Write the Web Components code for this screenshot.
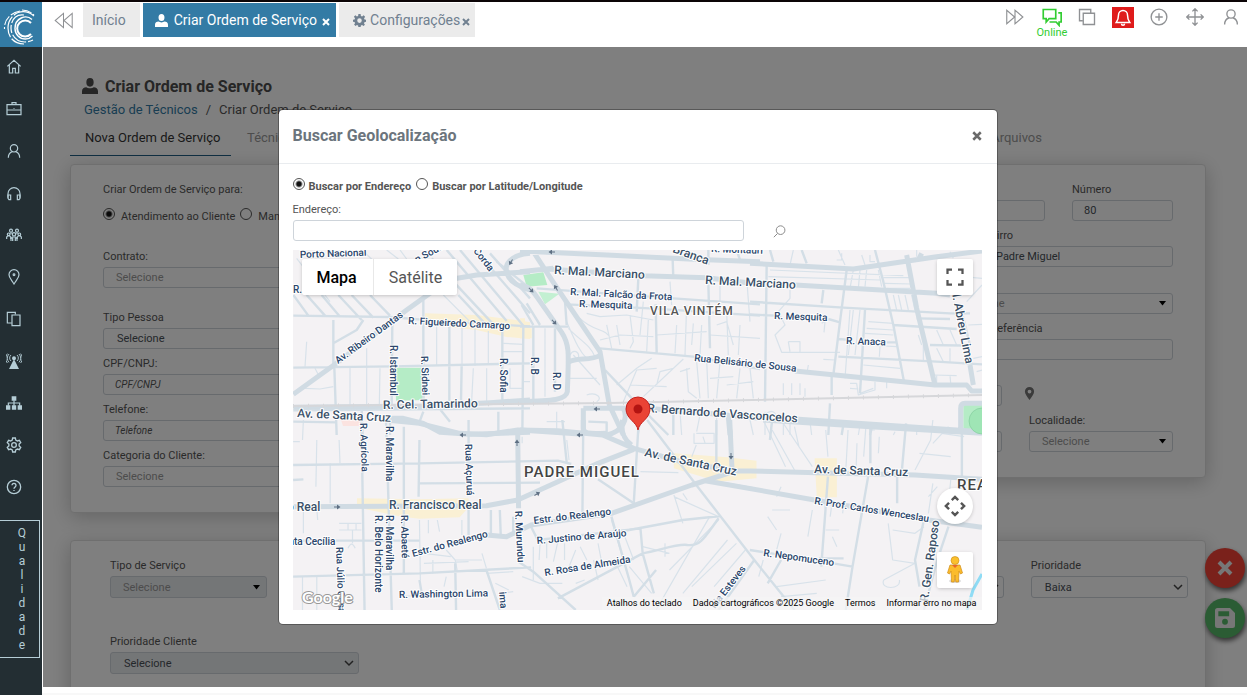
<!DOCTYPE html>
<html lang="pt-BR">
<head>
<meta charset="utf-8">
<title>Criar Ordem de Serviço</title>
<style>
  html, body { height: 100%; }
  body { margin: 0; background: #fff; font-family: Roboto, "Liberation Sans", sans-serif; font-size: 11px; color: #555; overflow: hidden; }
</style>
</head>
<body>
<app-shell>
  <side-bar slot="side"></side-bar>
  <top-bar slot="top"></top-bar>
  <order-page slot="page"></order-page>
  <modal-dialog slot="dialog" heading="Buscar Geolocalização">
    <geo-search></geo-search>
    <street-map></street-map>
  </modal-dialog>
</app-shell>

<script>
const define = (name, html, setup) => {
  const tpl = document.createElement('template');
  tpl.innerHTML = '<style>*{box-sizing:border-box}</style>' + html;
  customElements.define(name, class extends HTMLElement {
    constructor() {
      super();
      this.attachShadow({ mode: 'open' }).append(tpl.content.cloneNode(true));
    }
    connectedCallback() {
      if (setup && !this.ready) { this.ready = true; setup(this, this.shadowRoot); }
    }
  });
};

/* ---------- icons ---------- */
const ICONS = {
  home: '<path d="M2 11 12 2l10 9M5 9v12h5v-7h4v7h5V9"/>',
  briefcase: '<path d="M1.500 5.500h21v15h-21zM2 13.500h20M9 5V2.500h6V5M12 10.500v1"/>',
  user: '<circle cx="12" cy="8" r="5.500"/><path d="M3.500 22c0-5 3-8 6-9M20.500 22c0-5-3-8-6-9"/>',
  headset: '<path d="M3 19v-6a9 9 0 0 1 18 0v6"/><path d="M3 15h4v7H4.500L3 20zM21 15h-4v7h2.500l1.500-2z"/>',
  team: '<circle cx="12" cy="11" r="2.500"/><circle cx="7.500" cy="5.500" r="2.200"/><circle cx="16.500" cy="5.500" r="2.200"/><circle cx="4" cy="11" r="2"/><circle cx="20" cy="11" r="2"/><path d="M7.500 21v-3l2-3h5l2 3v3M1 18v-3l2-2h2l2 2v3M23 18v-3l-2-2h-2l-2 2v3M7.500 8v3M16.500 8v3M10 16v5M14 16v5"/>',
  pin: '<path d="M12 22.500C8 16 4.500 13 4.500 8.500a7.500 7.500 0 0 1 15 0c0 4.500-3.500 7.500-7.500 14z"/><circle cx="12" cy="8.500" r="1.300"/>',
  pages: '<path d="M8 18H2V2h12v3M9 6h12v16H9z"/>',
  antenna: '<path fill="currentColor" stroke="none" d="M12 9l7.500 15h-15zM9 8a3 3 0 1 1 6 0 3 3 0 0 1-6 0z"/><path d="M7.500 12a6 6 0 0 1 0-9M16.500 12a6 6 0 0 0 0-9M4.500 14A9 9 0 0 1 4.500 1.500M19.500 14a9 9 0 0 0 0-12.500M2 15a12 12 0 0 1 0-14M22 15a12 12 0 0 0 0-14"/>',
  sitemap: '<path fill="currentColor" stroke="none" d="M8.500 2h7v6.500h-7zM0 15.500h6.500V22H0zM8.800 15.500h6.500V22H8.800zM17.500 15.500H24V22h-6.500z"/><path d="M3.500 16v-4h17v4M12 8v8"/>',
  gear: '<circle cx="12" cy="12" r="3.500"/><path d="M10 1.500h4l.7 3.200 2.300 1.300 3.100-1 2 3.500-2.400 2.200v2.600l2.400 2.200-2 3.500-3.100-1-2.300 1.300-.7 3.200h-4l-.7-3.200L7 18l-3.100 1-2-3.500 2.400-2.200v-2.600L1.900 8.500l2-3.500L7 6l2.300-1.300z"/>',
  help: '<circle cx="12" cy="12" r="10"/><path d="M9 9.500a3 3 0 1 1 4.500 2.600c-1 .6-1.500 1-1.500 2.400M12 16.500v1.500"/>',
  rewind: '<path d="M12 3v18L1.500 12zM23 3v18L12.500 12z"/>',
  forward: '<path d="M12 3v18l10.500-9zM1 3v18l10.500-9z"/>',
  chat: '<path d="M1.500 3h15v11H8.500L5 18v-4H1.500zM19.500 7H23v11h-2.500v4L17 18h-7v-1"/>',
  copy: '<path d="M6 17H2V2h15v4M7 7h15v15H7z"/>',
  bell: '<path d="M12 2a6 6 0 0 1 6 6c0 6 1.500 8 3 10H3c1.500-2 3-4 3-10a6 6 0 0 1 6-6zM10 19.500a2 2 0 0 0 4 0"/>',
  plus: '<circle cx="12" cy="12" r="10.500"/><path d="M12 7v10M7 12h10"/>',
  move: '<path d="M12 1v22M1 12h22M8.500 4.500 12 1l3.500 3.500M8.500 19.500 12 23l3.500-3.500M4.500 8.500 1 12l3.500 3.500M19.500 8.500 23 12l-3.500 3.500"/>',
  person: '<path fill="currentColor" stroke="none" d="M12 0a5.500 6.500 0 0 1 0 13A5.500 6.500 0 0 1 12 0zM0 24v-4c0-4 3-6 6.500-6 2.500 2 8.500 2 11 0C21 14 24 16 24 20v4z"/>',
  cog: '<path fill="currentColor" stroke="none" fill-rule="evenodd" d="M10 0h4l.6 3.500 2.200.9L19.700 2.500l2.600 2.700-1.900 2.900.9 2.200 2.700.5v3.600l-2.900.6-.9 2.200 1.800 2.500-2.600 2.600-2.600-1.800-2.200.9-.6 3.300h-4l-.6-3.300-2.200-.9-2.600 1.800L2 19.600l1.800-2.500-.9-2.200-2.900-.6v-3.600l2.900-.5.8-2.200L1.700 5.200l2.600-2.700 2.900 1.900L9.400 3.500zM12 8a4.200 4.200 0 1 0 0 8.400A4.200 4.200 0 0 0 12 8z"/>',
  close: '<path stroke-width="6" d="M3 3l18 18M21 3 3 21"/>',
  search: '<circle cx="14" cy="9.500" r="8"/><path d="M8.500 15.500l-7 7"/>',
  marker: '<path fill="currentColor" stroke="none" fill-rule="evenodd" d="M12 0a8.500 8.500 0 0 1 8.500 8.500C20.500 14 16 18 12 24 8 18 3.500 14 3.500 8.500A8.500 8.500 0 0 1 12 0zm0 5a3.500 3.500 0 1 0 0 7 3.500 3.500 0 0 0 0-7z"/>',
  save: '<path fill="currentColor" stroke="none" fill-rule="evenodd" d="M3 0h15l6 6v15a3 3 0 0 1-3 3H3a3 3 0 0 1-3-3V3a3 3 0 0 1 3-3zm1 4v6h13V4zm8 9a3.500 3.500 0 1 0 0 7 3.500 3.500 0 0 0 0-7z"/>',
  expand: '<path stroke-width="3" d="M2 8V2h6M16 2h6v6M22 16v6h-6M8 22H2v-6"/>',
  pan: '<path stroke-width="2.600" d="M8.500 5.500 12 2l3.500 3.500M8.500 18.500 12 22l3.500-3.500M5.500 8.500 2 12l3.500 3.500M18.500 8.500 22 12l-3.500 3.500"/>'
};
define('ui-icon', `<style>
  :host { display: inline-flex; width: var(--size, 16px); height: var(--size, 16px); flex: none; }
  svg { width: 100%; height: 100%; }
</style><svg viewBox="0 0 24 24" fill="none" stroke="currentColor" aria-hidden="true"></svg>`, (el, root) => {
  const svg = root.querySelector('svg');
  svg.setAttribute('stroke-width', el.getAttribute('weight') || 1.8);
  svg.innerHTML = ICONS[el.getAttribute('name')];
});

/* ---------- shell ---------- */
define('app-shell', `<style>
  :host { display: grid; grid-template-columns: 42px minmax(0, 1fr); height: 100%; border-top: 2px solid #0c0507; box-sizing: border-box; }
  .right { display: grid; grid-template-rows: 45px minmax(0, 1fr) 8px; min-width: 0; min-height: 0; height: 100%; }
  main { position: relative; overflow: hidden; margin-left: 1px; min-height: 0; }
  .shade { position: absolute; inset: 0; background: rgba(0,0,0,.5); display: flex; justify-content: center; align-items: flex-start; padding: 63px 15px 0 0; }
  footer { border-bottom: 2px solid #f8f8f8; }
</style>
<slot name="side"></slot>
<div class="right">
  <slot name="top"></slot>
  <main><slot name="page"></slot><div class="shade"><slot name="dialog"></slot></div></main>
  <footer></footer>
</div>`);

define('side-bar', `<style>
  :host { display: block; background: #232e33; color: #b5cdd6; min-height: 0; overflow: hidden; }
  .logo { display: block; height: 45px; background: #337ba5; }
  .logo svg { display: block; width: 42px; height: 45px; }
  nav { display: flex; flex-direction: column; align-items: flex-start; padding-top: 12px; gap: 26px; }
  nav a { --size: 16px; height: 16px; margin-left: 6px; color: inherit; display: flex; }
  .quality { display: flex; align-items: center; justify-content: flex-end; width: 40px; height: 138px; margin-top: 25px; padding: 0 9px 0 0; border: 1px solid #b5cdd6; border-left: 0; background: none; color: #b5cdd6; font: 12px/16px Roboto, sans-serif; }
  .quality span { writing-mode: vertical-rl; text-orientation: upright; }
</style>
<a class="logo" href="#" aria-label="Início do sistema"><svg viewBox="0 0 42 45" fill="none" stroke="#fff">
  <path stroke-width="2" d="M31 21a8 8 0 1 0 0 11"/>
  <path stroke-width="1.400" d="M32 17.500C26 12 15 16 15 26.500c0 6 4.500 10.500 10.500 10.500 3 0 5-1 7-3"/>
  <path stroke-width="1.200" stroke-dasharray="16 2 8 2" d="M24 13C16 12 11 18 11 26c0 8 6 14 14 14 3 0 6-1 8-2"/>
  <path stroke-width="1.200" stroke-dasharray="22 2" d="M34 14C22 4 8 13 8 26c0 9 6 16 16 16"/>
  <path stroke-width="1.100" stroke-dasharray="10 2" d="M20 9C10 11 4 18 4.500 27M22 8c5 0 9 2 12 5"/>
</svg></a>
<nav aria-label="Principal">
  <a href="#" aria-label="Painel"><ui-icon name="home"></ui-icon></a>
  <a href="#" aria-label="Empresa"><ui-icon name="briefcase"></ui-icon></a>
  <a href="#" aria-label="Clientes"><ui-icon name="user"></ui-icon></a>
  <a href="#" aria-label="Suporte"><ui-icon name="headset"></ui-icon></a>
  <a href="#" aria-label="Equipes"><ui-icon name="team"></ui-icon></a>
  <a href="#" aria-label="Locais"><ui-icon name="pin"></ui-icon></a>
  <a href="#" aria-label="Documentos"><ui-icon name="pages"></ui-icon></a>
  <a href="#" aria-label="Rede"><ui-icon name="antenna" weight="1.400"></ui-icon></a>
  <a href="#" aria-label="Estrutura"><ui-icon name="sitemap"></ui-icon></a>
  <a href="#" aria-label="Ajustes"><ui-icon name="gear" weight="2"></ui-icon></a>
  <a href="#" aria-label="Ajuda"><ui-icon name="help" weight="2"></ui-icon></a>
</nav>
<button class="quality" type="button"><span>Qualidade</span></button>`);

define('top-bar', `<style>
  :host { display: flex; justify-content: space-between; align-items: flex-start; background: #fff; color: #8f9194; }
  .tabs { display: flex; align-items: center; gap: 3px; padding: 1px 0 0 12px; font-size: 14px; }
  button, a { font: inherit; color: inherit; text-decoration: none; border: 0; background: none; padding: 0; }
  .back { --size: 19px; margin-right: 7px; display: flex; }
  .tab { display: flex; align-items: center; height: 34px; padding: 0 6px 0 12px; background: #ebebeb; color: #708090; white-space: nowrap; }
  .tab > a { display: flex; align-items: center; gap: 6px; --size: 13px; }
  .tab > button { --size: 8px; margin: 3px 0 0 5px; display: flex; }
  .tab.plain { padding: 0 14px 0 9px; }
  .tab.on { background: #337ba5; color: #fff; }
  .tab.last { padding: 0 5px 0 14px; }
  .tab.last > a { gap: 4px; }
  .tab.last > button { margin-left: 2px; }
  .tools { display: flex; gap: 16px; padding: 5px 6px 0 0; --size: 18px; }
  .tools button { width: 20px; height: 20px; display: flex; flex-direction: column; align-items: center; justify-content: center; }
  .tools .chat { color: #32cd32; justify-content: flex-start; font-size: 11px; line-height: 12px; --size: 20px; height: 34px; margin-left: 1px; margin-right: -1px; }
  .tools .bell { background: #df1b1b; color: #fff; width: 22px; height: 21px; margin: 0 -1px; }
</style>
<div class="tabs">
  <button class="back" type="button" aria-label="Abas anteriores"><ui-icon name="rewind" weight="1.300"></ui-icon></button>
  <div class="tab plain"><a href="#">Início</a></div>
  <div class="tab on"><a href="#"><ui-icon name="person"></ui-icon>Criar Ordem de Serviço</a><button type="button" aria-label="Fechar aba"><ui-icon name="close"></ui-icon></button></div>
  <div class="tab last"><a href="#"><ui-icon name="cog"></ui-icon>Configurações</a><button type="button" aria-label="Fechar aba"><ui-icon name="close"></ui-icon></button></div>
</div>
<div class="tools">
  <button type="button" aria-label="Próximas abas"><ui-icon name="forward" weight="1.500"></ui-icon></button>
  <button type="button" class="chat"><ui-icon name="chat" weight="2"></ui-icon>Online</button>
  <button type="button" aria-label="Duplicar"><ui-icon name="copy"></ui-icon></button>
  <button type="button" class="bell" aria-label="Avisos"><ui-icon name="bell" weight="2"></ui-icon></button>
  <button type="button" aria-label="Adicionar"><ui-icon name="plus"></ui-icon></button>
  <button type="button" aria-label="Mover"><ui-icon name="move"></ui-icon></button>
  <button type="button" aria-label="Perfil"><ui-icon name="user"></ui-icon></button>
</div>`);

/* ---------- form pieces ---------- */
const FIELD = `
  :host { display: block; min-width: 0; }
  label { display: block; height: 20px; line-height: 20px; white-space: nowrap; color: #555; }
  label:empty { display: none; }
  :host([gap]) label:empty { display: block; }
  input, select { display: block; width: 100%; height: var(--control, 21px); border: 1px solid #ced4da; border-radius: 3px; background: #fff; color: #495057; font: inherit; padding: 0 11px; margin: 0; }
  input::placeholder { font-style: italic; font-size: 10px; color: #555; opacity: 1; }
  select { appearance: none; background: #fff no-repeat right 6px center; }
`;
define('text-field', `<style>${FIELD}</style><label for="c"></label><input id="c" type="text">`, (el, root) => {
  const input = root.querySelector('input');
  root.querySelector('label').textContent = el.getAttribute('label') || '';
  input.placeholder = el.getAttribute('placeholder') || '';
  input.value = el.getAttribute('value') || '';
  if (!el.hasAttribute('label')) input.setAttribute('aria-label', el.getAttribute('hint') || 'Campo');
});
const svgBg = s => `url("data:image/svg+xml,${encodeURIComponent(s)}")`;
const ARROW = svgBg('<svg xmlns="http://www.w3.org/2000/svg" width="7" height="5"><path d="M0 0h7L3.500 4.500z" fill="#000"/></svg>');
const CHEVRON = svgBg('<svg xmlns="http://www.w3.org/2000/svg" width="10" height="7"><path d="M1 1l4 4 4-4" fill="none" stroke="#444" stroke-width="1.500"/></svg>');
define('select-field', `<style>${FIELD}
  select { background-image: ${ARROW}; padding-left: 12px; color: #999; }
  :host([native]) select { background-image: ${CHEVRON}; background-position: right 4px center; color: #495057; padding-left: 13px; }
  :host([muted]) select { background-color: #e9ecef; }
</style><label for="c"></label><select id="c"><option></option></select>`, (el, root) => {
  root.querySelector('label').textContent = el.getAttribute('label') || '';
  root.querySelector('option').textContent = el.getAttribute('value') || '';
  if (!el.hasAttribute('label')) root.querySelector('select').setAttribute('aria-label', el.getAttribute('hint') || 'Opções');
});
define('radio-group', `<style>
  :host { display: flex; align-items: center; }
  label { display: flex; align-items: center; white-space: nowrap; gap: var(--radio-gap, 4px); margin-right: 5px; }
  input { appearance: none; width: 12px; height: 12px; margin: 0 0 4px; border: 1px solid #555; border-radius: 50%; flex: none; background: #fff; }
  input:checked { background: radial-gradient(circle, #111 0 2px, #fff 4px); }
</style>`, (el, root) => {
  el.getAttribute('options').split('|').forEach((text, i) => {
    const label = document.createElement('label');
    const input = Object.assign(document.createElement('input'), { type: 'radio', name: 'g', checked: i === 0 });
    label.append(input, text);
    root.append(label);
  });
});

/* ---------- service order page ---------- */
define('panel-card', `<style>
  :host { display: block; background: #fff; border: 1px solid #dfdfdf; border-radius: 4px; box-shadow: 0 4px 20px rgba(0,0,0,.22); box-sizing: border-box; }
</style><slot></slot>`);

define('order-page', `<style>
  :host { display: block; padding: 28px 41px 0 27px; background: #fff; color: #555; }
  h1 { display: flex; align-items: center; gap: 7px; margin: 0; padding-left: 12px; height: 22px; font-size: 16px; font-weight: 700; color: #4c4c4c; --size: 16px; }
  .crumbs { display: flex; gap: 8px; padding-left: 14px; margin-top: 2px; height: 22px; line-height: 22px; font-size: 13px; }
  a { color: #337ba5; text-decoration: none; }
  .tabs { display: flex; height: 35px; font-size: 13px; line-height: 34px; }
  .tabs a { color: #999; padding: 0 16px; height: 35px; }
  .tabs .on { color: #333; border-bottom: 1px solid #1f5f85; width: 161px; padding-left: 15px; white-space: nowrap; }
  .tabs .last { margin: 0 148px 0 auto; }
  .cols { display: grid; grid-template-columns: 1fr 1fr; gap: 24px; align-items: start; margin-top: 8px; }
  .left, .right { display: flex; flex-direction: column; gap: 5px; padding: 15px 32px 25px; }
  .left p { margin: 0; height: 20px; line-height: 20px; }
  radio-group { height: 22px; margin: 0 0 15px; --radio-gap: 6px; }
  .contract { margin-bottom: 15px; }
  .row { display: grid; gap: 27px; align-items: end; }
  .num { grid-template-columns: 1fr 101px; }
  .area { grid-template-columns: 1fr 189px; }
  .ref { grid-template-columns: 1fr 229px; }
  .loc { grid-template-columns: 1fr 144px; }
  .city { padding-top: 21px; }
  .geo { padding-top: 20px; align-items: center; }
  .geo button { border: 0; background: none; padding: 0; color: #777; --size: 13px; margin-left: -6px; height: 18px; display: flex; align-items: flex-start; }
  .more { display: grid; grid-template-columns: repeat(6, 1fr); gap: 34px 27px; padding: 15px 17px 40px 39px; height: 190px; --control: 22px; align-content: start; }
  .c5 { grid-column: 5; }
  .wide { grid-column: 1 / 3; width: 249px; }
  .cols + panel-card { margin-top: 27px; }
  .fabs { position: absolute; right: 2px; bottom: 49px; display: grid; gap: 10px; }
  .fabs button { width: 40px; height: 40px; border: 0; border-radius: 50%; padding: 0; display: grid; place-items: center; color: #eee; background: #f44336; box-shadow: 1px 3px 5px rgba(0,0,0,.6); }
  .fabs .save { background: #57b868; --size: 20px; }
</style>
<h1><ui-icon name="person"></ui-icon>Criar Ordem de Serviço</h1>
<div class="crumbs"><a href="#">Gestão de Técnicos</a><span>/</span><span>Criar Ordem de Serviço</span></div>
<nav class="tabs"><a class="on" href="#">Nova Ordem de Serviço</a><a href="#">Técnicos</a><a class="last" href="#">Arquivos</a></nav>
<div class="cols">
  <panel-card><div class="left">
    <p>Criar Ordem de Serviço para:</p>
    <radio-group options="Atendimento ao Cliente|Manutenção"></radio-group>
    <select-field class="contract" label="Contrato:" value="Selecione"></select-field>
    <select-field native label="Tipo Pessoa" value="Selecione"></select-field>
    <text-field label="CPF/CNPJ:" placeholder="CPF/CNPJ"></text-field>
    <text-field label="Telefone:" placeholder="Telefone"></text-field>
    <select-field label="Categoria do Cliente:" value="Selecione"></select-field>
  </div></panel-card>
  <panel-card><div class="right">
    <div class="row num"><text-field gap hint="Logradouro"></text-field><text-field label="Número" value="80"></text-field></div>
    <div class="row area"><text-field gap hint="Complemento"></text-field><text-field label="Bairro" value="Padre Miguel"></text-field></div>
    <div class="row ref city"><text-field hint="Cidade"></text-field><select-field hint="Estado" value="Selecione"></select-field></div>
    <div class="row ref"><text-field gap hint="CEP"></text-field><text-field label="Ponto de Referência"></text-field></div>
    <div class="row loc geo"><text-field hint="Geolocalização"></text-field><button type="button" aria-label="Localizar no mapa"><ui-icon name="marker"></ui-icon></button></div>
    <div class="row loc"><text-field gap hint="Região"></text-field><select-field label="Localidade:" value="Selecione"></select-field></div>
  </div></panel-card>
</div>
<panel-card><div class="more">
  <select-field muted label="Tipo de Serviço" value="Selecione"></select-field>
  <select-field native gap class="c5" hint="Situação"></select-field>
  <select-field native label="Prioridade" value="Baixa"></select-field>
  <select-field native muted class="wide" label="Prioridade Cliente" value="Selecione"></select-field>
</div></panel-card>
<div class="fabs"><button type="button" aria-label="Cancelar"><ui-icon name="close"></ui-icon></button><button class="save" type="button" aria-label="Salvar"><ui-icon name="save"></ui-icon></button></div>`);

/* ---------- dialog ---------- */
define('modal-dialog', `<style>
  :host { display: block; width: 100%; max-width: 718px; background: #fff; border-radius: 4px; box-shadow: 0 0 0 1px rgba(0,0,0,.3); color: #555; }
  header { display: flex; justify-content: space-between; align-items: center; height: 54px; padding: 0 15px 2px 14px; border-bottom: 1px solid #e9ecef; }
  h2 { margin: 0; font-size: 16px; font-weight: 700; color: #6c757d; }
  button { border: 0; background: none; padding: 0; color: #6a6a6a; --size: 10px; display: flex; }
  .body { padding: 10px 15px 14px 14px; }
</style>
<section role="dialog" aria-labelledby="t">
  <header><h2 id="t"></h2><button type="button" aria-label="Fechar"><ui-icon name="close"></ui-icon></button></header>
  <div class="body"><slot></slot></div>
</section>`, (el, root) => { root.querySelector('h2').textContent = el.getAttribute('heading'); });

define('geo-search', `<style>
  :host { display: block; margin-bottom: 9px; }
  radio-group { font-weight: 700; height: 24px; margin-bottom: 2px; }
  .row { display: flex; align-items: flex-end; gap: 29px; }
  text-field { flex: 0 1 451px; }
  button { border: 0; background: none; padding: 0 0 3px; color: #888; --size: 13px; display: flex; }
</style>
<radio-group options="Buscar por Endereço|Buscar por Latitude/Longitude"></radio-group>
<div class="row"><text-field label="Endereço:"></text-field><button type="button" aria-label="Buscar"><ui-icon name="search"></ui-icon></button></div>`);

/* ---------- map ---------- */
/* Each tile holds its own scale; strokes keep their screen width. */
const TILES = [
  { t: 'translate(-3 -5) scale(.33333)',
    yellow: '405,205 560,210 700,228 720,232 720,282 650,276 560,255 440,242 405,240',
    green: '315,368 395,368 404,465 318,467',
    l: 'M460 150 545 235M215 15 245 42M290 15 325 42M330 15 350 42M440 230 440 362M516 245 516 362M555 250 555 362M595 258 595 360M637 320H700M640 295 700 298M660 370V430H700M45 430 90 432 130 425M75 370 88 395M230 310 230 480M270 370 268 480M180 368V480M20 40 120 170M50 290 45 365M550 370 545 468M590 370V468M700 410H720',
    m: 'M470 15 650 228M425 40 610 238M510 15 700 242M560 20 720 205M600 25 720 160M620 50 720 130M505 150 585 236M10 150 55 212M50 150 105 212M95 150 150 215M145 150 215 225M185 150 250 218M240 150 300 212M220 225 200 255 130 295M10 212 300 216 470 230 720 244M10 368 310 364 720 355M130 225V368M133 368 140 570M307 225 305 480M400 165V470M478 240 478 468M515 362 513 468M637 258V468M700 245 697 570M215 490 218 570M300 530V570M10 530 140 532M400 500 385 540M10 496 720 490M440 480 480 530M625 500V560',
    b: 'M10 448 135 358 350 195 420 145 470 105 560 90 720 80M10 487 400 483 600 473 720 465M290 520 340 520 400 535 450 562 540 568 720 562M720 25C660 30 640 60 652 88 660 110 690 128 720 135' },
  { t: 'translate(227 -5) scale(.33333)',
    green: '10,90 70,82 82,120 20,125', green2: '55,140 118,146 75,178',
    yellow: '0,220 15,220 15,250 35,250 35,280 0,280',
    l: 'M75 250V455M140 230C170 300 180 320 200 340M150 330C160 310 180 320 175 340M145 250C185 290 210 300 225 335M180 220C220 260 260 250 270 280M200 205 240 215 320 210 400 225M240 285 300 270 400 275M290 240 300 300M260 240 275 310M330 210 340 290 330 310M370 170 360 270M385 225 380 320M450 110 455 180M470 240 465 325M500 180 495 330M520 235 515 300M545 240 540 330M590 240 620 230 640 300M600 100 600 175M680 100 690 230M620 200 625 330M660 240 655 330M410 270 560 260M570 270 720 280M290 420 350 370 395 340M310 470 350 375 410 370M330 420 440 425M410 420 420 380 460 370M480 380 510 370M500 370 505 440 530 460M530 350 540 460M560 345 565 460M600 350 590 460M570 400 640 395M620 420 700 410M660 370 650 460M690 370 700 460M200 450C230 440 250 460 230 470M80 530H135M110 500V560M360 540 355 570M150 400H230M160 330 240 420M370 455 490 342M480 500 485 570M540 510 530 560M590 515V570M690 525 700 570',
    m: 'M20 175 60 240M5 180 40 240M0 245 145 245M40 248V470M105 250V440M40 350 35 380M135 170 140 240M407 178 410 325M355 100 350 200M458 45 460 100M565 15 565 60M565 110 570 310M50 130 460 160 720 178M140 178 390 190 720 212M240 310 410 325 520 335 720 372M255 375 350 475 445 570M650 15 660 45M460 500V570M205 530 260 532V570',
    b: 'M0 18 260 30 520 43 720 50M40 20 100 112 240 320 268 480 310 570M0 120C30 125 40 140 50 155L125 262C150 300 146 330 142 440 138 465 100 468 0 470M145 352C170 335 210 350 242 330M85 72 370 92 560 98 720 118M0 80 100 70M190 490 380 490 560 505 720 520M190 490V550C190 570 220 565 260 565M310 490C325 520 310 560 260 570M0 555 190 568M625 515 630 570' },
  { t: 'translate(457 -5) scale(.33333)',
    green: '640,480 700,480 700,555 640,552',
    l: 'M60 75 460 92M55 95 390 105M120 135 120 160 85 200 105 240 75 270 95 322 270 322M115 290 120 320M115 290H150V320M215 235 230 225M225 230 222 262M130 15 120 60M265 15 285 60M335 30 345 60M260 45H275V25M360 30V50H375M310 75 300 130M330 75 325 130M350 75 345 125M385 75 395 125M400 98H480M405 115 485 117M410 130H480M310 195 295 330M330 195 315 330M355 230 430 235M350 250 430 255M345 265 430 270M345 300 440 305M390 305 388 335M340 360 450 370M220 343 255 345M175 360 172 378M100 415V450M125 415V450M150 415V450M165 430V455M300 415H320M300 430 325 432M320 415 325 450 375 435V410M330 445 370 430M410 410V430M300 195 285 400M430 150 440 195M445 150 455 195M465 150 475 195M485 150 495 195M560 255 580 300M600 255 620 300M520 300V350M505 270 515 300M560 310 580 350M600 310 600 350M540 300 640 300M560 390V415M600 390 602 415M550 390 620 392M600 20 610 40M500 15V35M670 340 696 335M680 380 696 375M650 170 696 120M640 95 696 100M655 240 696 238M330 540 325 570M100 530V570M120 530V570M180 530 185 570M435 560 430 570M500 548V570M50 505C70 490 85 510 75 525M45 500V570',
    m: 'M50 60 45 470M290 75 270 230 250 390M245 395 245 450M345 195 330 445M0 170 280 188 600 205 660 205M0 208 75 212M235 222 270 232M265 282 290 284M410 292H440M265 335 560 350 696 358M430 240 620 252M375 15 400 110 430 240 462 410M155 15 170 55M220 135 215 175M540 300 640 302M630 180 660 300M240 475 235 570M280 540 275 570M365 550 360 570M60 15 70 50M500 220 600 222',
    b: 'M0 55 310 72 560 35 696 18M135 120 560 145 600 150M135 378 460 410 555 420 650 420 665 438 696 438M470 30 500 190 555 420M660 360 670 420M135 522 400 540 696 560M632 555V490Q632 475 645 475H696M505 45 515 25' },
  { t: 'translate(-3 170) scale(.44643 .33333)',
    yellow: '150,235 290,238 400,235 400,262 380,292 290,296 250,290 150,262',
    yellow2: '860,100 980,112 1045,122 1045,175 960,185 860,145',
    yellow3: '1175,115 1225,115 1225,232 1180,232',
    l: 'M30 0 28 60M7 65H22M60 60 58 200M90 130V250M110 60 112 130M30 265V340M60 265 62 300M110 310H160M110 330H160M130 310V330M148 310V330M140 330V370M130 385Q138 360 146 385M28 470V570M60 470V570M290 300 292 480M310 300V340M330 300 335 335M350 390 370 420 430 420M300 400 360 410M320 420V460M370 420 375 455M430 400 440 445M300 430 400 425M385 300V345M250 530 290 525M350 470 345 500M440 460 500 455M460 490 490 510M470 520 500 515M520 50V70M620 60 625 120M560 370 558 420M575 365V415M600 365 590 425M615 370V420M640 390 625 440M650 380 665 420M690 370 700 440M720 300 760 480M740 330 775 325M750 350 770 420M840 370V410M790 380 850 400M680 420 690 480M730 430 755 500M760 440 810 520M520 470 560 490 610 490M545 380V480M660 480 640 490M860 225 880 310M860 230 960 290M890 240 880 220M940 290 820 570M1000 370 900 500M960 300 850 450M1020 390 950 500M980 360 880 520M910 40H950V70H905V40M925 50 930 70M900 110 910 75M1060 0 1110 140M1080 30 1130 150M1100 0 1170 140M1130 20 1140 80M1200 30 1205 110M1250 30 1245 150M1270 70 1268 150M1290 20 1285 110M1300 30H1310M1320 50 1318 100M1440 0 1435 60 1400 150M1475 20 1440 70M1410 100 1480 110M1460 40 1510 50M1440 190 1430 280M1450 200 1430 230M1480 180 1475 250M1420 320 1400 340 1350 330M1340 310 1350 420 1400 430 1330 480M1330 480C1320 510 1370 510 1365 480M1500 290 1510 260M1215 240 1210 290M1240 250 1238 280M1100 200 1090 230M1080 270H1120M1070 290 1090 330M1170 270 1160 350M1100 340 1090 390M1200 330H1230M1215 350 1225 380M1090 500 1200 480M1100 530 1180 520M1060 420 1050 470M920 540 1000 545M785 155 870 158',
    m: 'M160 0 167 570M215 0 228 570M255 20V460M290 60 288 230M7 135 290 130 600 122 630 132M290 190 560 188M7 362H290M7 470 290 460 540 442M7 180 30 178M400 0V220M400 265V345M450 270V345M470 270 472 345M657 0 655 285M780 30 770 250M985 0 990 50M955 0V130M690 178 770 250M930 180 1040 205M770 530 760 480 720 290M790 400 785 325M790 400 600 535M790 400C830 390 870 370 890 375 920 380 930 350 960 295M760 330 880 300 965 288M1030 390 1150 415 1260 440M1040 420 960 570M1205 170 1190 440M1295 170 1260 440 1245 570M1360 170V250M1420 300 1400 420 1410 500M1185 415H1240M540 320 555 360 760 330M620 130 610 0M290 480 295 520M370 430 372 570M440 450 470 570M500 290V340M1080 0 1075 60M1300 20V130M1380 10 1370 160M790 400 815 520M770 530 820 450M1505 40V170M1100 420 1070 490M512 425 545 455 640 570M800 0 910 195 1040 420 1130 570M1475 320 1450 420 1420 570',
    b: 'M215 0 290 10 380 40 440 44 510 30 600 32 700 45 770 85 890 130 1000 152 1180 158 1400 165 1550 178M7 260 440 257 510 240 600 185 690 130 770 88M510 32 512 265M440 345 485 350 540 315 720 280 900 195 1000 152M930 182 1175 240 1430 300 1550 322M745 0C740 40 750 60 765 75M657 0V40M985 0 990 145M1060 0 1300 20 1550 40' }
];
const LABELS = [
  /* x, y, angle, class, text */
  [7,8,-2,'s','Porto Nacional'],[124,13,-28,'s','n Sousa'],[180,1,52,'s','Corda'],[0,43,0,'s','R. Lisboa'],
  [115,74,3,'s','R. Figueiredo Camargo'],[45,114,-36,'s','Av. Ribeiro Dantas'],
  [97,95,90,'s','R. Istambul'],[128,106,88,'s','R. Sidnei'],[207,108,90,'s','R. Sofia'],[238,107,90,'s','R. B'],[260,122,90,'s','R. D'],
  [90,159,-1,'a','R. Cel. Tamarindo'],[4,167,3,'a','Av. de Santa Cruz'],
  [67,173,88,'s','R. Agrícola'],[93,176,90,'s','R. Maravilha'],[172,194,88,'s','Rua Açuruá'],
  [222,261,87,'s','R. Murundu'],[108,265,89,'s','R. Abaeté'],[93,265,90,'s','R. Maravilha'],[82,265,90,'s','R. Belo Horizonte'],[43,297,88,'s','Rua Júlio César'],
  [-6,261,0,'a','o Real'],[96,259,0,'a','R. Francisco Real'],[-16,295,0,'s','Santa Cecília'],
  [120,307,-15,'s','Estr. do Realengo'],[241,274,-7,'s','Estr. do Realengo'],[244,294,-5,'s','R. Justino de Araújo'],[252,326,-9,'s','R. Rosa de Almeida'],
  [106,348,-1,'s','R. Washington Lima'],[206,342,85,'s','ima'],
  [261,24,3,'a','R. Mal. Marciano'],[412,34,3,'a','R. Mal. Marciano'],[277,45,3,'s','R. Mal. Falcão da Frota'],[286,57,2,'s','R. Mesquita'],[481,69,2,'s','R. Mesquita'],[553,94,2,'s','R. Anaca'],
  [401,111,6,'s','Rua Belisário de Sousa'],[354,162,4,'a','R. Bernardo de Vasconcelos'],
  [351,206,12,'a','Av. de Santa Cruz'],[521,223,2,'a','Av. de Santa Cruz'],[521,254,9,'s','R. Prof. Carlos Wenceslau'],[470,306,8,'s','R. Nepomuceno'],
  [379,2,20,'a','Branca'],[418,2,2,'s','R. Montauri'],[656,28,79,'a','Mal. Abreu Lima'],[635,352,-82,'a','R. Gen. Raposo'],[422,359,-52,'s','nia Esteves'],
  [231,227,0,'d','PADRE MIGUEL'],[357,65,0,'e','VILA VINTÉM'],[664,240,0,'d','REALENGO']
];
const ARROWS = [[259,2,180],[44,257,0],[304,159,180],[287,185,180],[170,185,180],[244,244,-30],[438,206,90],[224,193,-90],[238,40,45],[263,38,-120],[261,72,45],[218,12,120]];
const poly = (pts, fill) => pts ? `<polygon points="${pts}" fill="${fill}"/>` : '';
define('street-map', `<style>
  :host { display: block; position: relative; height: 360px; overflow: hidden; background: #f4f2f4; }
  .map { display: block; width: 100%; height: 100%; }
  path { fill: none; vector-effect: non-scaling-stroke; stroke-linejoin: round; }
  .l { stroke: #d8e2ea; stroke-width: 1.200px; } .m { stroke: #d3dee6; stroke-width: 2.400px; } .b { stroke: #d0dbe3; stroke-width: 5px; }
  .solid { fill: #5f7084; stroke: none; }
  text { font-family: Roboto, sans-serif; font-weight: 500; fill: #29456b; stroke: #fff; stroke-width: 2px; paint-order: stroke; stroke-linejoin: round; }
  .s { font-size: 10px; } .a { font-size: 12px; fill: #3a5068; }
  .d { font-size: 15px; letter-spacing: 1px; fill: #444; } .e { font-size: 12px; letter-spacing: 1px; fill: #555; }
  .g { font-family: Lato, sans-serif; font-size: 16px; font-weight: 700; fill: #fff; stroke: #999; stroke-width: 2px; }
  button, a { font: inherit; color: inherit; text-decoration: none; border: 0; background: none; padding: 0; }
  .kinds, .ctl { position: absolute; background: #fff; box-shadow: 0 1px 4px -1px rgba(0,0,0,.3); border-radius: 2px; }
  .kinds { left: 9px; top: 9px; display: flex; height: 36px; font-size: 16px; color: #565656; }
  .kinds button { padding: 0 15px; }
  .kinds .on { color: #000; font-weight: 500; padding-right: 16px; border-right: 1px solid #e8e8e8; }
  .ctl { right: 9px; width: 36px; height: 36px; display: grid; place-items: center; color: #555; }
  .full { top: 9px; --size: 18px; } .pan { top: 238px; border-radius: 50%; --size: 22px; } .man { top: 302px; }
  .legal { position: absolute; right: 0; bottom: 0; display: flex; gap: 11px; height: 13px; line-height: 13px; padding: 0 5px; font-size: 9px; color: #000; background: rgba(245,245,245,.7); white-space: nowrap; }
</style>
<svg class="map" viewBox="0 0 689 360" preserveAspectRatio="xMidYMid slice" role="img" aria-label="Mapa de Padre Miguel"></svg>
<div class="kinds"><button class="on" type="button">Mapa</button><button type="button">Satélite</button></div>
<button class="ctl full" type="button" aria-label="Tela cheia"><ui-icon name="expand"></ui-icon></button>
<button class="ctl pan" type="button" aria-label="Controles da câmera"><ui-icon name="pan"></ui-icon></button>
<button class="ctl man" type="button" aria-label="Street View"><svg width="18" height="28" viewBox="0 0 18 28"><ellipse cx="9" cy="25" rx="6" ry="2" fill="#ddd"/><circle cx="9" cy="4.500" r="4" fill="#fbc02d" stroke="#c88a15" stroke-width=".6"/><path d="M4 9h10l2.500 8-2 1L13 15l-.5 11H9.800L9 19l-.8 7H5.500L5 15l-1.500 3-2-1z" style="fill:#fbbc2c;stroke:#d08c18;stroke-width:.7"/><path d="M6 9l3 3 3-3" style="fill:#e8662a"/></svg></button>
<div class="legal"><button type="button">Atalhos do teclado</button><span>Dados cartográficos ©2025 Google</span><a href="#">Termos</a><a href="#">Informar erro no mapa</a></div>`,
(el, root) => {
  root.querySelector('.map').innerHTML =
    TILES.map(k => `<g transform="${k.t}">${poly(k.yellow,'#faf0d4')}${poly(k.yellow2,'#faf0d4')}${poly(k.yellow3,'#faf0d4')}${poly(k.green,'#b5ecc6')}${poly(k.green2,'#c3f0d2')}</g>`).join('') +
    '<path style="fill:#fbe3e0" d="M47 167h22v9H50z"/>' +
    ['l','m','b'].map(c => TILES.map(k => `<g transform="${k.t}"><path class="${c}" d="${k[c]}"/></g>`).join('')).join('') +
    '<path stroke="#d6d7da" stroke-width="2" d="M0 156l317-3 372-8"/><path stroke="#d6d7da" stroke-width="4" stroke-dasharray="1 14" d="M0 156l317-3 372-8"/>' +
    '<circle cx="689" cy="171" r="13" fill="#9fe5b5" stroke="#7fc99a" stroke-width=".6"/>' +
    '<path stroke="#8fdcf5" stroke-width="3" d="M689 324l-9 16-6 20"/>' +
    ARROWS.map(([x,y,r]) => `<path class="solid" transform="translate(${x} ${y}) rotate(${r})" d="M-3-.5H0V-2.500L3.500 0 0 2.500V.5H-3z"/>`).join('') +
    LABELS.map(([x,y,r,c,t]) => `<text class="${c}" transform="translate(${x} ${y}) rotate(${r})">${t}</text>`).join('') +
    '<text class="g" x="9" y="353">Google</text>' +
    '<path style="fill:#ea4335;stroke:#c5221f;stroke-width:1px" d="M345 180c-1-8-12-11-12-21a12 12 0 0 1 24 0c0 10-11 13-12 21z"/><circle cx="345" cy="159" r="4.500" fill="#b31412"/>';
});
</script>
</body>
</html>
